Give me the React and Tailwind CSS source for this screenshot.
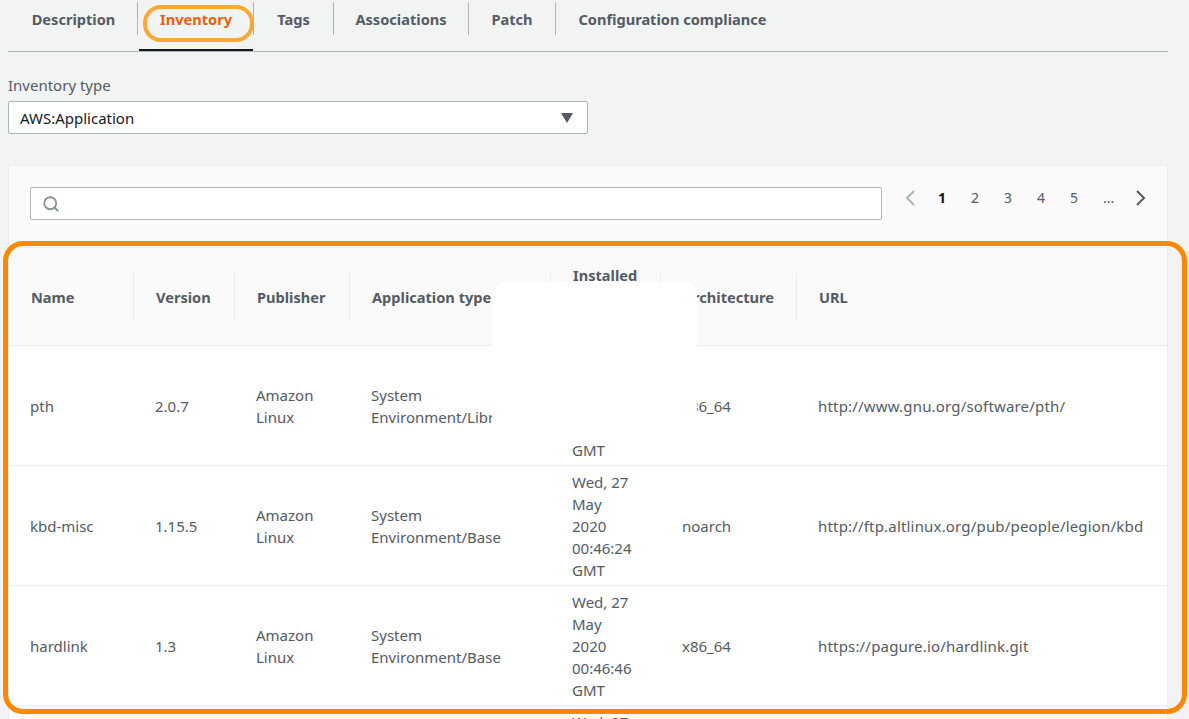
import React from "react";
import { Search } from "lucide-react";

const tabs = [
  { label: "Description", w: "w-[130px]", pad: "pl-[2px]" },
  { label: "Inventory", w: "w-[116px]", active: true, pad: "pl-[1px]" },
  { label: "Tags", w: "w-[80px]" },
  { label: "Associations", w: "w-[135px]" },
  { label: "Patch", w: "w-[87px]" },
  { label: "Configuration compliance", w: "w-[235px]", last: true, pad: "pr-[2px]" },
];

const rows = [
  ["pth", "2.0.7", "System", "Environment/Library", "00:46:24", "x86_64", "http://www.gnu.org/software/pth/"],
  ["kbd-misc", "1.15.5", "System", "Environment/Base", "00:46:24", "noarch", "http://ftp.altlinux.org/pub/people/legion/kbd"],
  ["hardlink", "1.3", "System", "Environment/Base", "00:46:46", "x86_64", "https://pagure.io/hardlink.git"],
  ["", "", "", "", "00:46:46", "", ""],
];

const heads = [
  { t: "Version", w: "w-[101px]" },
  { t: "Publisher", w: "w-[115px]" },
  { t: "Application type", w: "w-[201px]" },
  { t: "Installed", w: "w-[110px]", tall: true },
  { t: "Architecture", w: "w-[136px]" },
  { t: "URL", w: "" },
];

function Cell({ children, first, url }) {
  return (
    <td className={`h-[120px] border-t border-[#eaeded] ${first ? "pl-[21px]" : "pl-[22px]"} ${url ? "tracking-[0.18px]" : ""} align-middle whitespace-nowrap overflow-hidden`}>
      {children}
    </td>
  );
}

export default function App() {
  return (
    <div className="relative h-[719px] w-[1189px] overflow-hidden bg-[#f2f3f3] pl-2 text-[15px] leading-[22px] text-[#545b64] [font-family:'Noto_Sans',sans-serif]">
      <div className="flex h-[52px] w-[1160px] border-b border-[#aab7b8] text-[14.6px]">
        {tabs.map((t) => (
          <div key={t.label} className={`relative h-[51px] shrink-0 pt-[2px] ${t.w}`}>
            <div className={`flex h-[33px] items-center justify-center pt-px font-bold ${t.pad || ""} ${t.last ? "" : "border-r border-[#aab7b8]"} ${t.active ? "text-[#ec5f0b]" : ""}`}>
              {t.label}
            </div>
            {t.active && <div className="absolute bottom-0 left-px right-px h-[2px] bg-[#16191f]" />}
          </div>
        ))}
      </div>

      <div className="mt-[22px] text-[#545b64]">Inventory type</div>
      <div className="mt-[5px] flex h-[33px] w-[580px] items-center justify-between rounded-[2px] border border-[#aab7b8] bg-white pl-[11px] pr-[14px] text-[#16191f]">
        <span>AWS:Application</span>
        <svg width="12" height="10" viewBox="0 0 12 10"><path d="M0 0h12L6 10z" fill="#545b64" /></svg>
      </div>

      <div className="mt-[31px] w-[1160px] border border-[#eaeded] bg-[#fafafa]">
        <div className="flex h-[81px] items-start pl-[21px] pt-[21px]">
          <div className="flex h-[33px] w-[852px] items-center rounded-[2px] border border-[#aab7b8] bg-white pl-[11px]">
            <Search size={18} strokeWidth={2.4} className="text-[#879596]" />
          </div>
          <div className="relative ml-[22px] flex h-[22px] items-center">
            <svg width="12" height="16" viewBox="0 0 12 16" fill="none" stroke="#aab7b8" strokeWidth="2"><path d="M10 1 3 8l7 7" /></svg>
            <div className="ml-[22px] flex">
              {["1", "2", "3", "4", "5", "..."].map((n) => (
                <span key={n} className={`w-[33px] text-[14px] ${n === "1" ? "font-bold text-[#16191f]" : ""} ${n === "..." ? "text-[12px]" : ""}`}>{n}</span>
              ))}
            </div>
            <svg className="-ml-[1px]" width="12" height="16" viewBox="0 0 12 16" fill="none" stroke="#545b64" strokeWidth="2"><path d="m2 1 7 7-7 7" /></svg>
          </div>
        </div>

        <table className="w-full table-fixed">
          <thead className="text-[14.6px]">
            <tr className="h-[98px] bg-[#fafafa]">
              <th className="w-[124px] border-t border-[#eaeded] pl-[22px] text-left font-bold">Name</th>
              {heads.map((h) => (
                <th key={h.t} className={`${h.w} border-t border-[#eaeded] p-0 text-left font-bold`}>
                  <div className="flex h-[48px] items-center overflow-visible whitespace-nowrap border-l border-[#eaeded] pl-[22px]">
                    {h.tall ? <span>Installed<br />time<br />&nbsp;</span> : h.t}
                  </div>
                </th>
              ))}
            </tr>
          </thead>
          <tbody className="bg-white">
            {rows.map((r, i) => (
              <tr key={i}>
                <Cell first>{r[0]}</Cell>
                <Cell>{r[1]}</Cell>
                <Cell>{i < 3 ? <>Amazon<br />Linux</> : ""}</Cell>
                <Cell>{r[2]}<br />{r[3]}</Cell>
                <Cell>Wed, 27<br />May<br />2020<br />{r[4]}<br />GMT</Cell>
                <Cell>{r[5]}</Cell>
                <Cell url>{r[6]}</Cell>
              </tr>
            ))}
          </tbody>
        </table>
      </div>

      <div className="absolute left-[492px] top-[282px] h-[158px] w-[205px] rounded-[15px] bg-white" />
      <div className="pointer-events-none absolute left-[143px] top-[5px] h-[37px] w-[111px] rounded-[18px] border-[4px] border-[#ffa733]" />
      <div className="pointer-events-none absolute left-[3px] top-[241px] h-[473px] w-[1184px] rounded-[20px] border-[5px] border-[#ff8800]" />
    </div>
  );
}
